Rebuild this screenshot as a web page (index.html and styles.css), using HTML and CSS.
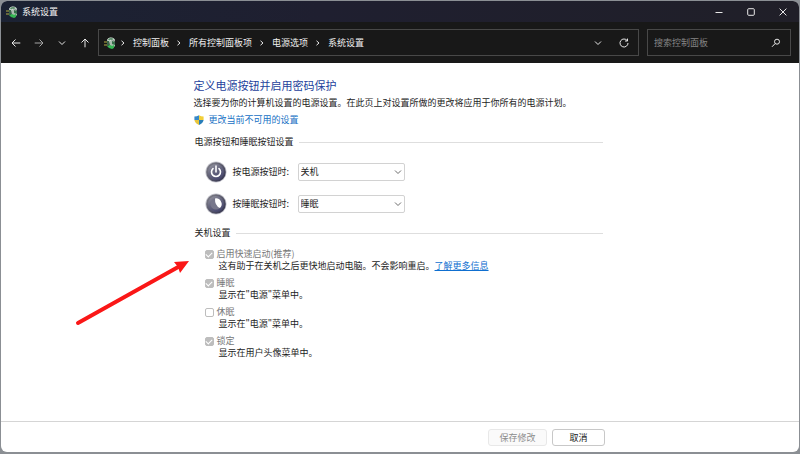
FILE: index.html
```html
<!DOCTYPE html>
<html lang="zh-CN">
<head>
<meta charset="utf-8">
<meta name="viewport" content="width=device-width, initial-scale=1">
<title>系统设置</title>
<link rel="stylesheet" href="styles.css">
</head>
<body>
<svg class="defs" aria-hidden="true">
  <defs>
    <linearGradient id="rim" x1="0" y1="0" x2="1" y2="1"><stop offset="0" stop-color="#85858d"/><stop offset="1" stop-color="#2d2d49"/></linearGradient>
    <linearGradient id="disc" x1="0" y1="0" x2="0.6" y2="1"><stop offset="0" stop-color="#9a9aa4"/><stop offset="0.5" stop-color="#686880"/><stop offset="1" stop-color="#48486e"/></linearGradient>
    <symbol id="power-plan" viewBox="0 0 12 12">
      <path d="M3 3Q4 0 7 0.6Q11 1 11 4Q8 2 6 5L4 5Z" fill="#dfe9e2"/>
      <path d="M4 2Q7 0 10 2L8 3Q6 2 5 4Z" fill="#598b67"/>
      <path d="M5 4L9 3L11 5V9L9 11L6 10Z" fill="#a9bcae"/>
      <path d="M8 4L11 5V8L8 7Z" fill="#356d49"/>
      <path d="M3 9Q6 7 8 9L10 8Q11 11 8 12Q5 12 3 9Z" fill="#35b653"/>
      <path d="M0 5H4M0 8H4" stroke="#b6ad42"/>
      <path d="M3 4H5V9H3Z" fill="#376347"/>
    </symbol>
    <symbol id="chevron-down" viewBox="0 0 8 8"><path d="M1 2.5L4 5.5L7 2.5"/></symbol>
    <symbol id="chevron-right" viewBox="0 0 8 8"><path d="M2.5 1.8L5 4L2.5 6.2"/></symbol>
  </defs>
</svg>

<div class="window">
  <header class="titlebar">
    <svg class="app-icon"><use href="#power-plan"/></svg>
    <h1 class="window-title">系统设置</h1>
    <div class="window-controls">
      <button type="button" aria-label="最小化"><svg viewBox="0 0 8 8"><path d="M0.5 4.5H7.5"/></svg></button>
      <button type="button" aria-label="最大化"><svg viewBox="0 0 8 8"><rect x="0.7" y="0.7" width="6.6" height="6.6" rx="1"/></svg></button>
      <button type="button" aria-label="关闭"><svg viewBox="0 0 8 8"><path d="M0.6 0.6L7.4 7.4M7.4 0.6L0.6 7.4"/></svg></button>
    </div>
  </header>

  <div class="toolbar">
    <div class="history">
      <button type="button" aria-label="后退"><svg viewBox="0 0 10 10"><path d="M9.3 5H1M4.5 1.5L1 5L4.5 8.5"/></svg></button>
      <button type="button" class="dim" aria-label="前进"><svg viewBox="0 0 10 10"><path d="M0.7 5H9M5.5 1.5L9 5L5.5 8.5"/></svg></button>
      <button type="button" aria-label="最近位置"><svg class="small"><use href="#chevron-down"/></svg></button>
      <button type="button" aria-label="向上"><svg viewBox="0 0 10 10"><path d="M5 9.3V1M1.5 4.5L5 1L8.5 4.5"/></svg></button>
    </div>
    <div class="address">
      <svg class="app-icon"><use href="#power-plan"/></svg>
      <nav class="crumbs" aria-label="路径">
        <svg><use href="#chevron-right"/></svg><a href="#">控制面板</a>
        <svg><use href="#chevron-right"/></svg><a href="#">所有控制面板项</a>
        <svg><use href="#chevron-right"/></svg><a href="#">电源选项</a>
        <svg><use href="#chevron-right"/></svg><a href="#">系统设置</a>
      </nav>
      <button type="button" class="address-button" aria-label="以前的位置"><svg class="small"><use href="#chevron-down"/></svg></button>
      <button type="button" class="address-button" aria-label="刷新"><svg viewBox="0 0 10 10"><path d="M8.2 2.6A4 4 0 1 0 9 5M8.5 0.6V3H6"/></svg></button>
    </div>
    <label class="search">
      <input type="search" placeholder="搜索控制面板" aria-label="搜索控制面板">
      <svg viewBox="0 0 10 10"><circle cx="6" cy="3.7" r="2.5"/><path d="M4.2 5.5L1 8.8"/></svg>
    </label>
  </div>

  <main class="page">
    <div class="content">
      <h2 class="heading">定义电源按钮并启用密码保护</h2>
      <p class="intro">选择要为你的计算机设置的电源设置。在此页上对设置所做的更改将应用于你所有的电源计划。</p>
      <a class="admin-link" href="#">
        <svg viewBox="0 0 10 10"><path d="M5 0.2Q3 1.5 0.4 1.5V5H5Z" fill="#3788c8"/><path d="M5 0.2Q7 1.5 9.6 1.5V5H5Z" fill="#f2cf3a"/><path d="M0.4 5Q1 8.3 5 10V5Z" fill="#e8c63d"/><path d="M9.6 5Q9 8.3 5 10V5Z" fill="#287eb9"/></svg>
        <span>更改当前不可用的设置</span>
      </a>

      <section>
        <h3 class="section-title">电源按钮和睡眠按钮设置</h3>
        <div class="option-row">
          <svg class="disc" viewBox="0 0 22 22"><circle cx="11" cy="11" r="10.6" fill="#c5c5cd"/><circle cx="11" cy="11" r="9.8" fill="url(#rim)"/><circle cx="11" cy="11" r="8" fill="url(#disc)"/><path d="M8 7.6A4.5 4.5 0 1 0 14 7.6M11 5V11" fill="none" stroke="#fff" stroke-width="1.6" stroke-linecap="round"/></svg>
          <label for="power">按电源按钮时:</label>
          <div class="dropdown"><select id="power"><option>关机</option></select><svg><use href="#chevron-down"/></svg></div>
        </div>
        <div class="option-row">
          <svg class="disc" viewBox="0 0 22 22"><circle cx="11" cy="11" r="10.6" fill="#c5c5cd"/><circle cx="11" cy="11" r="9.8" fill="url(#rim)"/><circle cx="11" cy="11" r="8" fill="url(#disc)"/><circle cx="11" cy="11" r="5.6" fill="#77778b"/><path d="M10 5.4A5.7 5.7 0 0 1 15 15Q9.6 12.5 10 5.4Z" fill="#fff"/></svg>
          <label for="sleep">按睡眠按钮时:</label>
          <div class="dropdown"><select id="sleep"><option>睡眠</option></select><svg><use href="#chevron-down"/></svg></div>
        </div>
      </section>

      <section>
        <h3 class="section-title">关机设置</h3>
        <div class="checks">
          <div class="check">
            <input type="checkbox" id="fast" checked disabled><label for="fast">启用快速启动(推荐)</label>
            <p>这有助于在关机之后更快地启动电脑。不会影响重启。<a href="#">了解更多信息</a></p>
          </div>
          <div class="check">
            <input type="checkbox" id="show-sleep" checked disabled><label for="show-sleep">睡眠</label>
            <p>显示在"电源"菜单中。</p>
          </div>
          <div class="check">
            <input type="checkbox" id="hibernate" disabled><label for="hibernate">休眠</label>
            <p>显示在"电源"菜单中。</p>
          </div>
          <div class="check">
            <input type="checkbox" id="lock" checked disabled><label for="lock">锁定</label>
            <p>显示在用户头像菜单中。</p>
          </div>
        </div>
      </section>
    </div>
    <svg class="pointer" viewBox="0 0 118 68" aria-hidden="true"><path d="M4 63L106 6" stroke="#fa1717" stroke-width="4" stroke-linecap="round"/><path d="M115 1L100 2L104 7L106 13Z" fill="#fa1717"/></svg>
  </main>

  <footer class="footer">
    <button type="button" class="save" disabled>保存修改</button>
    <button type="button" class="cancel">取消</button>
  </footer>
</div>
</body>
</html>
```
FILE: styles.css
```css
* {
  box-sizing: border-box;
}

body {
  margin: 0;
  background: #8b8f94;
  color: #1c1c1c;
  font-family: "Noto Sans CJK SC", sans-serif;
  font-size: 9px;
  line-height: 12px;
}

h1, h2, h3, p {
  margin: 0;
  font-size: inherit;
  font-weight: 400;
}

button, input, select {
  font: inherit;
  color: inherit;
}

button {
  padding: 0;
}

.defs {
  position: absolute;
  width: 0;
  height: 0;
}

.window {
  display: flex;
  flex-direction: column;
  min-height: calc(100vh - 3px);
  margin: 1px 1px 2px;
  overflow: hidden;
  border-radius: 6px;
  background: #fff;
}

.titlebar {
  display: flex;
  align-items: center;
  height: 21px;
  padding-left: 5px;
  background: linear-gradient(90deg, #1b2233, #1f1f30 40%, #201f28);
  color: #f2f2f2;
}

.app-icon {
  width: 12px;
  height: 12px;
  flex: none;
}

.window-title {
  margin-left: 4px;
}

.window-controls {
  display: flex;
  margin-left: auto;
}

.window-controls button {
  display: grid;
  place-items: center;
  width: 32px;
  height: 20px;
  border: 0;
  background: none;
}

.window-controls svg {
  width: 8px;
  height: 8px;
}

.window-controls svg,
.history svg,
.crumbs svg,
.address-button svg,
.search svg {
  fill: none;
  stroke: #e8e8e8;
}

.toolbar {
  display: flex;
  align-items: center;
  height: 41px;
  padding: 0 8px 0 4px;
  background: #181818;
  color: #f0f0f0;
}

.history {
  display: flex;
  gap: 1px;
}

.history button {
  display: grid;
  place-items: center;
  width: 22px;
  height: 22px;
  border: 0;
  background: none;
}

.history svg,
.address-button svg {
  width: 10px;
  height: 10px;
}

.history .small,
.address-button .small {
  width: 8px;
  height: 8px;
}

.history .dim svg {
  stroke: #a5a5a5;
}

.address {
  display: flex;
  flex: 1;
  align-items: center;
  height: 27px;
  margin-left: 2px;
  padding: 0 1px 0 5px;
  border: 1px solid #484848;
}

.crumbs {
  display: flex;
  align-items: center;
  flex: 1;
  gap: 6px;
  margin-left: 3px;
}

.crumbs svg {
  width: 8px;
  height: 8px;
}

.crumbs a {
  color: inherit;
  text-decoration: none;
}

.address-button {
  display: grid;
  place-items: center;
  width: 26px;
  height: 24px;
  border: 0;
  background: none;
}

.search {
  display: flex;
  align-items: center;
  width: 144px;
  height: 27px;
  margin-left: 8px;
  padding: 0 9px 0 6px;
  border: 1px solid #484848;
}

.search input {
  flex: 1;
  min-width: 0;
  padding: 0;
  border: 0;
  outline: 0;
  background: none;
}

.search input::placeholder {
  color: #858585;
}

.search svg {
  width: 10px;
  height: 10px;
}

.page {
  position: relative;
  flex: 1;
  padding: 14px 24% 0;
}

.heading {
  color: #1d3f9c;
  font-size: 11px;
  line-height: 16px;
}

.intro {
  margin-top: 4px;
  white-space: nowrap;
}

.admin-link {
  display: flex;
  align-items: center;
  gap: 5px;
  margin-top: 5px;
  color: #1670c4;
  text-decoration: none;
}

.admin-link svg {
  width: 10px;
  height: 10px;
}

.section-title {
  display: flex;
  align-items: center;
  gap: 5px;
  margin-top: 10px;
  padding-left: 1px;
}

.section-title::after {
  content: "";
  flex: 1;
  height: 1px;
  background: #dedede;
}

.content {
  display: flex;
  flex-direction: column;
  padding-left: 1px;
  max-width: 410px;
}

.option-row {
  display: flex;
  align-items: center;
  height: 22px;
  margin-top: 10px;
  padding-left: 11px;
}

.section-title + .option-row {
  margin-top: 13px;
}

.option-row:last-child {
  margin-bottom: 12px;
}

.option-row:last-child,
section + section .section-title {
  margin-bottom: 0;
}

section + section .section-title {
  margin-top: 12px;
}

.disc {
  width: 22px;
  height: 22px;
}

.option-row label {
  width: 65px;
  margin-left: 6px;
  white-space: nowrap;
}

.dropdown {
  display: grid;
  align-items: center;
  width: 107px;
}

.dropdown select,
.dropdown svg {
  grid-area: 1 / 1;
}

.dropdown select {
  appearance: none;
  width: 100%;
  height: 18px;
  padding: 0 2px;
  border: 1px solid #d2d2d2;
  border-radius: 2px;
  background: #fff;
}

.dropdown svg {
  justify-self: end;
  width: 8px;
  height: 8px;
  margin-right: 3px;
  fill: none;
  stroke: #6c6c6c;
  pointer-events: none;
}

.checks {
  display: grid;
  gap: 5px;
  margin-top: 9px;
  padding-left: 11px;
}

.check {
  display: grid;
  grid-template-columns: 9px 1fr;
  align-items: center;
  column-gap: 3px;
}

.check input {
  appearance: none;
  display: grid;
  place-items: center;
  width: 9px;
  height: 9px;
  margin: 0;
  border: 1px solid #bdbdbd;
  border-radius: 2px;
  background: #fff;
}

.check input:checked {
  background: #bdbdbd;
}

.check input:checked::after {
  content: "";
  width: 5px;
  height: 3px;
  border: solid #fff;
  border-width: 0 0 1px 1px;
  transform: rotate(-45deg);
}

.check label {
  color: #777;
}

.check p {
  grid-column: 2;
  padding-left: 2px;
  white-space: nowrap;
}

.check a {
  color: #0f6fd0;
}

.pointer {
  position: absolute;
  top: 197px;
  left: 73px;
  width: 118px;
  height: 68px;
  fill: none;
}

.footer {
  display: flex;
  justify-content: flex-end;
  gap: 5px;
  padding: 7px 194px 6px;
  border-top: 1px solid #d5d5d5;
}

.footer button {
  width: 53px;
  height: 17px;
  border: 1px solid #c8c8c8;
  border-radius: 3px;
  background: #fff;
}

.footer .save {
  width: 59px;
  border-color: #e8e8e8;
  background: #fafafa;
  color: #8c8c8c;
}
```
